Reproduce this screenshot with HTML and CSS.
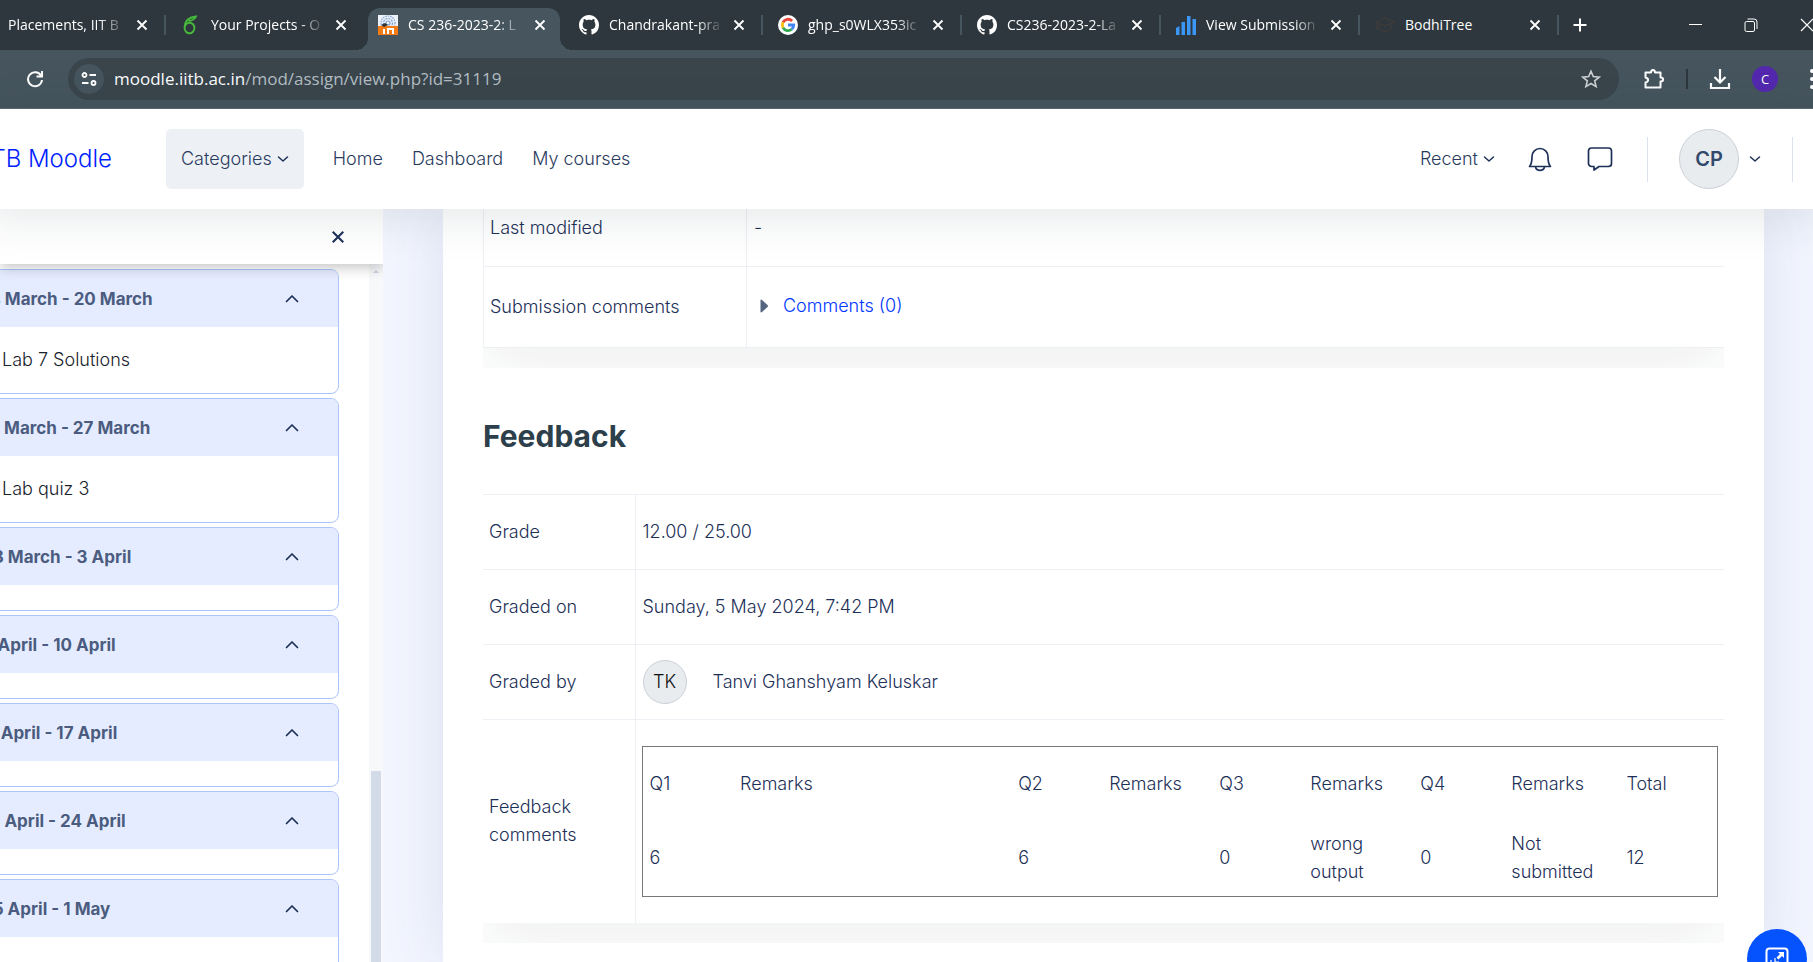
FILE: index.html
```
<!DOCTYPE html>
<html lang="en">
<head>
<meta charset="utf-8">
<title>CS 236-2023-2: Lab submission</title>
<link rel="stylesheet" href="styles.css">
</head>
<body>
<svg class="sprite" aria-hidden="true">
  <symbol id="x" viewBox="0 0 12 12"><path d="M1.5 1.5l9 9M10.5 1.5l-9 9" fill="none" stroke="currentColor" stroke-width="1.8"/></symbol>
  <symbol id="down" viewBox="0 0 12 12"><path d="M1.5 4l4.500 4 4.500-4" fill="none" stroke="currentColor" stroke-width="1.500" stroke-linecap="round" stroke-linejoin="round"/></symbol>
  <symbol id="up" viewBox="0 0 14 10"><path d="M1.500 7.500L7 2l5.500 5.500" fill="none" stroke="currentColor" stroke-width="1.700" stroke-linecap="round" stroke-linejoin="round"/></symbol>
  <symbol id="github" viewBox="0 0 16 16"><path fill="#fff" d="M8 0C3.580 0 0 3.580 0 8c0 3.540 2.290 6.530 5.470 7.590.4.070.550-.170.550-.380 0-.190-.010-.820-.010-1.490-2.010.370-2.530-.490-2.690-.940-.090-.230-.480-.940-.820-1.130-.280-.150-.680-.520-.010-.530.630-.010 1.080.580 1.230.820.720 1.210 1.870.870 2.330.660.070-.520.280-.870.510-1.070-1.780-.2-3.640-.890-3.640-3.950 0-.870.310-1.590.820-2.150-.080-.2-.360-1.020.080-2.120 0 0 .670-.210 2.200.820.640-.180 1.320-.270 2-.270s1.360.090 2 .270c1.530-1.040 2.200-.820 2.200-.820.440 1.100.160 1.920.080 2.120.510.560.820 1.270.820 2.150 0 3.070-1.870 3.750-3.650 3.950.290.250.540.730.540 1.480 0 1.070-.010 1.930-.010 2.200 0 .210.150.460.550.380A8.010 8.010 0 0 0 16 8c0-4.420-3.580-8-8-8z"/></symbol>
</svg>

<header class="browser">
  <div class="tabstrip">
    <div class="tab tab-first"><span class="tab-title fade">Placements, IIT B</span><button class="tab-close" aria-label="Close tab"><svg><use href="#x"/></svg></button></div>
    <div class="tab">
      <svg class="fav" viewBox="0 0 20 20"><g fill="none" stroke="#46b83c" stroke-width="1.900"><ellipse cx="8.500" cy="13" rx="4.900" ry="5.300"/><path d="M4 11C4 6 8 2 15 1.500c-1 2.500-4 4-7.500 4.500"/></g></svg>
      <span class="tab-title fade">Your Projects - O</span><button class="tab-close" aria-label="Close tab"><svg><use href="#x"/></svg></button></div>
    <div class="tab active">
      <svg class="fav" viewBox="0 0 20 20"><path fill="#eef3fb" d="M0 0h20v20H0z"/><g fill="none" stroke="#7f9fd0" stroke-width="1.200"><circle cx="10" cy="8" r="7" stroke-dasharray="1.500 1"/><circle cx="10" cy="8" r="4.500" stroke-dasharray="2 1"/><circle cx="10" cy="8" r="2"/></g><path fill="#f47a14" d="M0 11h20v9H0z"/><path fill="none" stroke="#fff" stroke-width="2" d="M6 14v5M10 19v-5h5v5"/><path fill="#333" d="M3 10l4-2 3 2-4 2z"/></svg>
      <span class="tab-title fade">CS 236-2023-2: L</span><button class="tab-close" aria-label="Close tab"><svg><use href="#x"/></svg></button></div>
    <div class="tab">
      <svg class="fav"><use href="#github"/></svg>
      <span class="tab-title fade">Chandrakant-pra</span><button class="tab-close" aria-label="Close tab"><svg><use href="#x"/></svg></button></div>
    <div class="tab">
      <svg class="fav" viewBox="0 0 20 20"><circle cx="10" cy="10" r="10" fill="#fff"/><g fill="none" stroke-width="2.800"><path stroke="#ea4335" d="M5 7.300A5.700 5.700 0 0 1 14.100 6"/><path stroke="#fbbc05" d="M5 12.700a5.700 5.700 0 0 1 0-5.400"/><path stroke="#34a853" d="M13.700 14.300A5.700 5.700 0 0 1 5 12.700"/><path stroke="#4285f4" d="M10 10h5.700a5.700 5.700 0 0 1-2 4.300"/></g></svg>
      <span class="tab-title fade">ghp_s0WLX353ic</span><button class="tab-close" aria-label="Close tab"><svg><use href="#x"/></svg></button></div>
    <div class="tab">
      <svg class="fav"><use href="#github"/></svg>
      <span class="tab-title fade">CS236-2023-2-La</span><button class="tab-close" aria-label="Close tab"><svg><use href="#x"/></svg></button></div>
    <div class="tab">
      <svg class="fav" viewBox="0 0 20 20"><path fill="#3b97f5" d="M0 13l3.500-2v9H0zM5.500 7H9v13H5.500zM11 1h3.500v19H11zM16.500 4H20v16h-3.500z"/></svg>
      <span class="tab-title fade">View Submission</span><button class="tab-close" aria-label="Close tab"><svg><use href="#x"/></svg></button></div>
    <div class="tab">
      <svg class="fav" viewBox="0 0 20 20"><path fill="none" stroke="#3d3b3a" stroke-width="1.500" d="M1 7l9-4 9 4-9 4zM4 9v5c3 3 9 3 12 0V9M2 8v7"/></svg>
      <span class="tab-title">BodhiTree</span><button class="tab-close" aria-label="Close tab"><svg><use href="#x"/></svg></button></div>
    <button class="new-tab" aria-label="New tab"><svg viewBox="0 0 14 14"><path d="M7 0.500v13M0.500 7h13" stroke="currentColor" stroke-width="2"/></svg></button>
    <div class="window-controls">
      <button aria-label="Minimize"><svg viewBox="0 0 14 14"><path d="M1 6.500h13" stroke="currentColor" fill="none"/></svg></button>
      <button aria-label="Restore"><svg viewBox="0 0 14 14"><g fill="none" stroke="currentColor"><rect x="1" y="3.500" width="9.500" height="10" rx="1.500"/><path d="M3.500 1h6.500a3 3 0 0 1 3 3v7"/></g></svg></button>
      <button aria-label="Close window"><svg viewBox="0 0 14 14"><path d="M1 1l12 12M13 1L1 13" stroke="currentColor" fill="none" stroke-width="1.200"/></svg></button>
    </div>
  </div>
  <div class="toolbar">
    <button class="tool reload" aria-label="Reload"><svg viewBox="0 0 18 18"><path d="M15 5.500A7 7 0 1 0 16 10M16 1v5.500h-5.500" fill="none" stroke="currentColor" stroke-width="2"/></svg></button>
    <div class="omnibox">
      <button class="site-info" aria-label="Site information"><svg viewBox="0 0 16 16"><g fill="none" stroke="currentColor" stroke-width="1.800"><circle cx="3.500" cy="4" r="2"/><path d="M8.500 4H15M1 12h6.500"/><circle cx="12.500" cy="12" r="2"/></g></svg></button>
      <div class="url"><span class="host">moodle.iitb.ac.in</span>/mod/assign/view.php?id=31119</div>
      <button class="tool star" aria-label="Bookmark"><svg viewBox="0 0 20 20"><path d="M10 2.200l2.300 5.400 5.900.5-4.500 3.800 1.400 5.700-5.100-3.100-5.100 3.100 1.400-5.700-4.500-3.800 5.900-.5z" fill="none" stroke="currentColor" stroke-width="1.600"/></svg></button>
    </div>
    <button class="tool puzzle" aria-label="Extensions"><svg viewBox="0 0 22 22"><path d="M2.500 4.500h5.500c0-3.500 4-3.500 4 0h5.500v5c3.500 0 3.500 4 0 4v6h-15v-5c3.500-1 3.500-4 0-5z" fill="none" stroke="currentColor" stroke-width="2" stroke-linejoin="round"/></svg></button>
    <span class="tool-sep"></span>
    <button class="tool download" aria-label="Downloads"><svg viewBox="0 0 22 22"><path d="M11 1v13M5.500 9l5.500 5.500L16.500 9M2 15v5h18v-5" fill="none" stroke="currentColor" stroke-width="2.200"/></svg></button>
    <button class="profile">C</button>
    <button class="menu" aria-label="Menu"><svg viewBox="0 0 4 20"><g fill="currentColor"><circle cx="2" cy="2" r="2"/><circle cx="2" cy="10" r="2"/><circle cx="2" cy="18" r="2"/></g></svg></button>
  </div>
</header>

<nav class="navbar">
  <div class="brand-box"><a class="brand" href="#">TB Moodle</a></div>
  <button class="categories">Categories <svg class="chev"><use href="#down"/></svg></button>
  <div class="links"><a href="#">Home</a><a href="#">Dashboard</a><a href="#">My courses</a></div>
  <button class="recent">Recent <svg class="chev"><use href="#down"/></svg></button>
  <button class="nav-icon" aria-label="Notifications"><svg viewBox="0 0 26 26"><g fill="none" stroke="currentColor" stroke-width="1.700" stroke-linejoin="round"><path d="M2.500 20.500c2-2 2.500-5 2.500-10a8 8 0 0 1 16 0c0 5 .5 8 2.500 10z"/><path d="M8.500 21c1 4.500 8 4.500 9 0"/></g></svg></button>
  <button class="nav-icon" aria-label="Messages"><svg viewBox="0 0 26 26"><path d="M4.500 2h17a3 3 0 0 1 3 3v12.500a3 3 0 0 1-3 3H12L7 24v-3.500H4.500a3 3 0 0 1-3-3V5a3 3 0 0 1 3-3z" fill="none" stroke="currentColor" stroke-width="1.700" stroke-linejoin="round"/></svg></button>
  <span class="divider"></span>
  <button class="user"><span class="avatar">CP</span><svg class="chev"><use href="#down"/></svg></button>
  <span class="divider"></span>
</nav>

<div class="page">
  <aside class="drawer">
    <div class="drawer-head"><button aria-label="Close drawer"><svg><use href="#x"/></svg></button></div>
    <div class="drawer-body">
      <div class="index">
        <section class="week"><button class="week-head">14 March - 20 March<svg><use href="#up"/></svg></button><a class="week-item" href="#">Lab 7 Solutions</a></section>
        <section class="week"><button class="week-head">21 March - 27 March<svg><use href="#up"/></svg></button><a class="week-item" href="#">Lab quiz 3</a></section>
        <section class="week"><button class="week-head">28 March - 3 April<svg><use href="#up"/></svg></button><div class="week-empty"></div></section>
        <section class="week"><button class="week-head">4 April - 10 April<svg><use href="#up"/></svg></button><div class="week-empty"></div></section>
        <section class="week"><button class="week-head">11 April - 17 April<svg><use href="#up"/></svg></button><div class="week-empty"></div></section>
        <section class="week"><button class="week-head">18 April - 24 April<svg><use href="#up"/></svg></button><div class="week-empty"></div></section>
        <section class="week"><button class="week-head">25 April - 1 May<svg><use href="#up"/></svg></button><div class="week-item"></div></section>
      </div>
      <div class="scrollbar"><svg class="scroll-up" viewBox="0 0 6 3"><path d="M0 3l3-3 3 3z" fill="#c9d2e3"/></svg><div class="thumb"></div></div>
    </div>
  </aside>

  <main class="content">
    <div class="table-wrap">
      <table class="grid status">
        <colgroup><col class="status-label"><col></colgroup>
        <tr><th scope="row">Last modified</th><td>-</td></tr>
        <tr class="tall"><th scope="row">Submission comments</th><td><a class="comments" href="#"><svg viewBox="0 0 8 14"><path d="M0.500 1.500Q0.500 0 2 1l5.500 5q1 1 0 2L2 13q-1.500 1-1.500-.5z" fill="#56657f"/></svg>Comments (0)</a></td></tr>
      </table>
    </div>
    <h3>Feedback</h3>
    <div class="table-wrap">
      <table class="grid feedback">
        <colgroup><col class="feedback-label"><col></colgroup>
        <tr><th scope="row">Grade</th><td>12.00 / 25.00</td></tr>
        <tr><th scope="row">Graded on</th><td>Sunday, 5 May 2024, 7:42 PM</td></tr>
        <tr><th scope="row">Graded by</th><td><div class="grader"><span class="initials">TK</span><a href="#">Tanvi Ghanshyam Keluskar</a></div></td></tr>
        <tr><th scope="row">Feedback comments</th><td class="marks-cell">
          <table class="marks">
            <colgroup><col class="c-q"><col class="c-wide"><col class="c-q"><col class="c-r"><col class="c-q"><col class="c-r"><col class="c-q"><col class="c-last"><col class="c-total"></colgroup>
            <tr><td>Q1</td><td>Remarks</td><td>Q2</td><td>Remarks</td><td>Q3</td><td>Remarks</td><td>Q4</td><td>Remarks</td><td>Total</td></tr>
            <tr><td>6</td><td></td><td>6</td><td></td><td>0</td><td>wrong output</td><td>0</td><td>Not submitted</td><td>12</td></tr>
          </table>
        </td></tr>
      </table>
    </div>
  </main>
</div>
<button class="fab" aria-label="Open block drawer"><svg viewBox="0 0 24 24"><rect x="1.500" y="1.500" width="21" height="21" rx="3" fill="none" stroke="#fff" stroke-width="2"/><path d="M13 5h6v6l-2-2-3.500 3.500-2-2L15 7z" fill="#fff"/><path d="M10 11v4h4M6 13v5h5" fill="none" stroke="#fff" stroke-width="1.200"/></svg></button>
</body>
</html>
```
FILE: styles.css
```
* { box-sizing: border-box; }
body {
  margin: 0;
  height: 100vh;
  display: flex;
  flex-direction: column;
  overflow: hidden;
  background: #f3f6ff;
  color: #1d3058;
  font: 300 18px/28px Inter, "Liberation Sans", sans-serif;
}
button { border: 0; padding: 0; background: none; color: inherit; font: inherit; cursor: pointer; }
a { color: inherit; text-decoration: none; }
svg { display: block; flex: none; }
.sprite { display: none; }

/* Browser frame */
.browser { flex: none; color: #fff; font: 400 14px/20px "Open Sans", "Noto Sans", sans-serif; }
.tabstrip { display: flex; height: 50px; background: #2d373d; overflow: hidden; }
.tab { flex: 0 0 199px; min-width: 0; display: flex; align-items: center; position: relative; padding: 0 18px 0 15px; }
.tab-first { flex-basis: 166px; padding-left: 8px; }
.tab::after { content: ""; position: absolute; right: 0; top: 15px; width: 2px; height: 20px; background: #46555e; }
.tab.active { flex: 0 0 192px; margin: 8px 4px 0 3px; padding: 0 14px 8px 10px; background: #46555e; border-radius: 12px 12px 0 0; }
.tab:has(+ .active)::after { display: none; }
.tab.active::before, .tab.active::after { content: ""; position: absolute; top: auto; bottom: 0; width: 12px; height: 12px; background: radial-gradient(circle at 0 0, transparent 12px, #46555e 12px); }
.tab.active::before { left: -12px; }
.tab.active::after { right: -12px; background: radial-gradient(circle at 100% 0, transparent 12px, #46555e 12px); }
.fav { width: 20px; height: 20px; margin-right: 10px; }
.tab-title { flex: 1; min-width: 0; white-space: nowrap; overflow: hidden; }
.fade { mask-image: linear-gradient(90deg, #000 80%, rgba(0, 0, 0, .15)); }
.tab-close { margin-left: 14px; }
.tab-close svg { width: 12px; height: 12px; }
.new-tab { margin-left: 14px; }
.new-tab svg { width: 14px; height: 14px; }
.window-controls { flex: none; display: flex; gap: 42px; margin-left: auto; margin-right: -1px; }
.window-controls svg { width: 14px; height: 14px; }

.toolbar { display: flex; align-items: center; height: 59px; padding-left: 26px; background: #46555e; border-bottom: 1px solid #5e6b73; overflow: hidden; }
.reload svg { width: 18px; height: 18px; }
.omnibox { flex: 1; display: flex; align-items: center; height: 42px; margin: 0 24px; padding: 0 18px 0 6px; border-radius: 21px; background: #3a454c; }
.site-info { display: grid; place-items: center; width: 30px; height: 30px; border-radius: 50%; background: #46555e; }
.site-info svg { width: 16px; height: 16px; }
.url { flex: 1; margin-left: 10px; font-size: 17px; line-height: 24px; color: #b5bec3; }
.host { color: #fff; }
.star { color: #d0d3d5; }
.star svg { width: 20px; height: 20px; }
.puzzle svg, .download svg { width: 22px; height: 22px; }
.tool-sep { width: 2px; height: 20px; margin: 0 21px; background: #2d373d; }
.profile { width: 26px; height: 26px; margin: 0 32px 0 21px; border-radius: 50%; background: #5428b0; font-size: 13px; line-height: 26px; }
.menu { margin-right: -1px; }
.menu svg { width: 4px; height: 20px; }

/* Site navigation */
.navbar { flex: none; position: relative; z-index: 3; display: flex; align-items: center; height: 100px; padding-right: 20px; background: #fff; box-shadow: 0 0 40px 12px rgba(30, 45, 60, .1); color: #2a3b5e; }
.brand-box { width: 112px; display: flex; justify-content: flex-end; }
.brand { color: #001eff; font-size: 24px; line-height: 32px; white-space: nowrap; }
.categories { display: flex; align-items: center; gap: 5px; height: 60px; margin-left: 54px; padding: 0 15px; border-radius: 5px; background: #edf1f6; }
.chev { width: 12px; height: 12px; color: #1d3058; }
.links { flex: 1; display: flex; gap: 29px; margin-left: 29px; }
.recent { display: flex; align-items: center; gap: 5px; margin-right: 32px; }
.nav-icon { margin-right: 34px; color: #1d3058; }
.nav-icon svg { width: 26px; height: 26px; }
.divider { width: 1px; height: 45px; background: #dbe2ee; }
.user { display: flex; align-items: center; gap: 10px; margin: 0 31px; }
.avatar { width: 60px; height: 60px; border: 1px solid #ccd1d9; border-radius: 50%; background: #e8ecef; color: #33496b; font-weight: 600; font-size: 20px; line-height: 58px; text-align: center; }

/* Page area */
.page { flex: 1; min-height: 0; display: flex; }
.drawer { flex: 0 0 383px; display: flex; flex-direction: column; background: #fff; }
.drawer-head { flex: none; display: flex; justify-content: flex-end; align-items: center; height: 55px; padding-right: 38px; position: relative; z-index: 1; background: #fff; box-shadow: 0 4px 12px rgba(0, 0, 0, .22); clip-path: inset(0 0 -20px 0); }
.drawer-head svg { width: 14px; height: 14px; color: #1d3058; }
.drawer-body { flex: 1; min-height: 0; display: flex; overflow: hidden; }
.index { flex: 1; display: flex; flex-direction: column; gap: 4px; margin: 5px 30px 0 -30px; }
.week { flex: none; border: 1px solid #a9c5fb; border-radius: 8px; overflow: hidden; background: #fff; }
.week-head { display: flex; align-items: center; justify-content: space-between; width: 100%; height: 57px; padding: 0 39px 0 11px; background: #e6ecff; color: #4b5c80; font-size: 17px; font-weight: 700; }
.week-head svg { width: 14px; height: 10px; color: #1d3058; }
.week-item { display: flex; align-items: center; height: 66px; padding-left: 31px; color: #17222c; }
.week-empty { height: 25px; }
.scrollbar { flex: 0 0 14px; display: flex; flex-direction: column; align-items: center; padding-top: 6px; background: #f7f8fa; }
.scroll-up { width: 6px; height: 3px; }
.thumb { flex: 0 0 400px; width: 10px; margin-top: 498px; background: #d3dbe8; }

.content { flex: 1; min-width: 0; margin: 0 49px 0 60px; padding: 0 40px; background: #fff; box-shadow: 0 0 60px rgba(60, 80, 130, .13); }
.table-wrap { overflow: hidden; padding-bottom: 20px; }
.grid { width: 100%; table-layout: fixed; border-collapse: collapse; box-shadow: 0 20px 60px rgba(30, 45, 50, .07); background: #fff; }
.grid th { font-weight: 300; text-align: left; }
.grid > tbody > tr > th, .grid > tbody > tr > td { height: 75px; padding: 0 6px; border-bottom: 1px solid #edeff5; }
.grid > tbody > tr > td { padding-left: 7px; border-left: 1px solid #edeff5; }
.status > tbody > tr > th { border-left: 1px solid #edeff5; }
.status > tbody > tr:first-child > * { height: 57px; padding-bottom: 18px; }
.status > tbody > .tall > * { height: 81px; }
.status-label { width: 263px; }
.feedback-label { width: 152px; }
.feedback { border-top: 1px solid #edeff5; }
.feedback > tbody > tr:last-child > * { border-bottom: 0; }
.comments { display: inline-flex; align-items: center; gap: 15px; padding-left: 6px; color: #0037ff; }
.comments svg { width: 8px; height: 14px; }
h3 { margin: 50px 0 40px; color: #2d3f4a; font-size: 30px; line-height: 36px; font-weight: 700; }
.grader { display: flex; align-items: center; gap: 26px; }
.initials { width: 44px; height: 44px; border: 1px solid #ccd1d9; border-radius: 50%; background: #e8ecef; color: #111; line-height: 42px; text-align: center; }
.grid > tbody > tr > .marks-cell { padding: 26px 6px; }
.marks { width: 100%; table-layout: fixed; border: 1px solid #777; border-collapse: collapse; }
.marks td { height: 75px; padding: 0 7px; }
.c-q { width: 91px; }
.c-r { width: 110px; }
.c-wide { width: 278px; }
.c-last { width: 115px; }
.c-total { width: 98px; }

.fab { position: fixed; z-index: 4; right: 6px; bottom: -27px; width: 60px; height: 60px; display: grid; place-items: center; border-radius: 50%; background: #0552ff; }
.fab svg { width: 24px; height: 24px; }
```
